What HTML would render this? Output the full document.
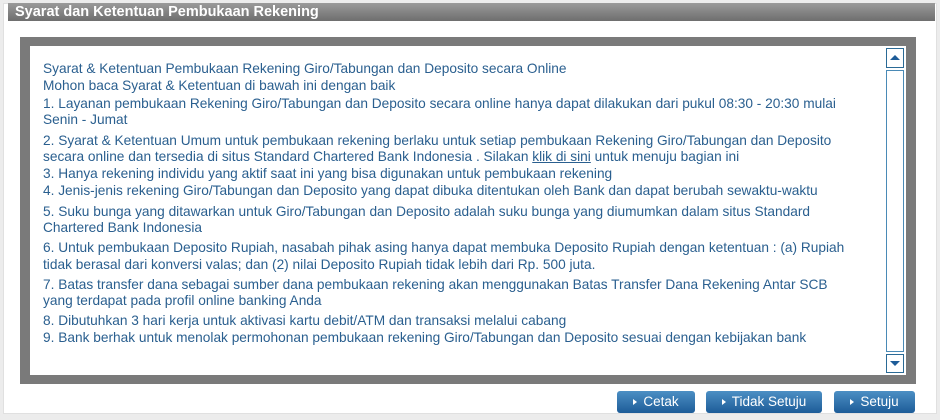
<!DOCTYPE html>
<html><head><style>
body{margin:0;width:940px;height:420px;background:#ececec;font-family:"Liberation Sans",Arial,sans-serif;position:relative;overflow:hidden}
.box{position:absolute;left:3px;top:3px;width:932px;height:409px;background:#fff;border:1px solid #e0e0e0}
.title{position:absolute;left:8px;top:3px;width:927px;height:18px;background:linear-gradient(#9a9a9a,#6e6e6e);color:#fff;font-weight:bold;font-size:14.5px;line-height:18px;padding-left:7px;box-sizing:border-box}
.frame{position:absolute;left:20px;top:37px;width:896px;height:347px;background:#7a7a7a}
.inner{position:absolute;left:30px;top:46px;width:876px;height:329px;background:#fff}
.t{position:absolute;left:43px;white-space:nowrap;font-size:13.7px;line-height:16px;color:#2a5f8f}
.t a{color:#2a5f8f;text-decoration:underline}
.sb{position:absolute;left:886px;width:18px;border:1px solid #2a6a96;background:#fff;box-sizing:border-box}
.btn{position:absolute;top:391px;height:22px;border-radius:3px;background:linear-gradient(#4c8fc4,#1d5c98);color:#fff;font-size:13.5px;line-height:22px;text-align:center;box-sizing:border-box}
.btn:before{content:"";display:inline-block;border-left:4px solid #fff;border-top:3px solid transparent;border-bottom:3px solid transparent;margin-right:6px;vertical-align:1px}
</style></head><body>
<div class="box"></div>
<div class="title">Syarat dan Ketentuan Pembukaan Rekening</div>
<div class="frame"></div>
<div class="inner"></div>
<div class="sb" style="top:48px;height:20px"><div style="margin:6px auto 0;width:0;border-left:5px solid transparent;border-right:5px solid transparent;border-bottom:5px solid #1d5c98"></div></div>
<div class="sb" style="top:70px;height:282px;border-color:#4a8ab6"></div>
<div class="sb" style="top:354px;height:19px"><div style="margin:6px auto 0;width:0;border-left:5px solid transparent;border-right:5px solid transparent;border-top:5px solid #1d5c98"></div></div>
<div class="t" style="top:61px">Syarat &amp; Ketentuan Pembukaan Rekening Giro/Tabungan dan Deposito secara Online</div>
<div class="t" style="top:78px">Mohon baca Syarat &amp; Ketentuan di bawah ini dengan baik</div>
<div class="t" style="top:96px">1. Layanan pembukaan Rekening Giro/Tabungan dan Deposito secara online hanya dapat dilakukan dari pukul 08:30 - 20:30 mulai</div>
<div class="t" style="top:112px">Senin - Jumat</div>
<div class="t" style="top:133px">2. Syarat &amp; Ketentuan Umum untuk pembukaan rekening berlaku untuk setiap pembukaan Rekening Giro/Tabungan dan Deposito</div>
<div class="t" style="top:149px">secara online dan tersedia di situs Standard Chartered Bank Indonesia . Silakan <a>klik di sini</a> untuk menuju bagian ini</div>
<div class="t" style="top:166px">3. Hanya rekening individu yang aktif saat ini yang bisa digunakan untuk pembukaan rekening</div>
<div class="t" style="top:183px">4. Jenis-jenis rekening Giro/Tabungan dan Deposito yang dapat dibuka ditentukan oleh Bank dan dapat berubah sewaktu-waktu</div>
<div class="t" style="top:204px">5. Suku bunga yang ditawarkan untuk Giro/Tabungan dan Deposito adalah suku bunga yang diumumkan dalam situs Standard</div>
<div class="t" style="top:220px">Chartered Bank Indonesia</div>
<div class="t" style="top:240px">6. Untuk pembukaan Deposito Rupiah, nasabah pihak asing hanya dapat membuka Deposito Rupiah dengan ketentuan : (a) Rupiah</div>
<div class="t" style="top:257px">tidak berasal dari konversi valas; dan (2) nilai Deposito Rupiah tidak lebih dari Rp. 500 juta.</div>
<div class="t" style="top:277px">7. Batas transfer dana sebagai sumber dana pembukaan rekening akan menggunakan Batas Transfer Dana Rekening Antar SCB</div>
<div class="t" style="top:293px">yang terdapat pada profil online banking Anda</div>
<div class="t" style="top:313px">8. Dibutuhkan 3 hari kerja untuk aktivasi kartu debit/ATM dan transaksi melalui cabang</div>
<div class="t" style="top:330px">9. Bank berhak untuk menolak permohonan pembukaan rekening Giro/Tabungan dan Deposito sesuai dengan kebijakan bank</div>
<div class="btn" style="left:617px;width:78px">Cetak</div>
<div class="btn" style="left:706px;width:116px">Tidak Setuju</div>
<div class="btn" style="left:834px;width:81px">Setuju</div>
</body></html>
